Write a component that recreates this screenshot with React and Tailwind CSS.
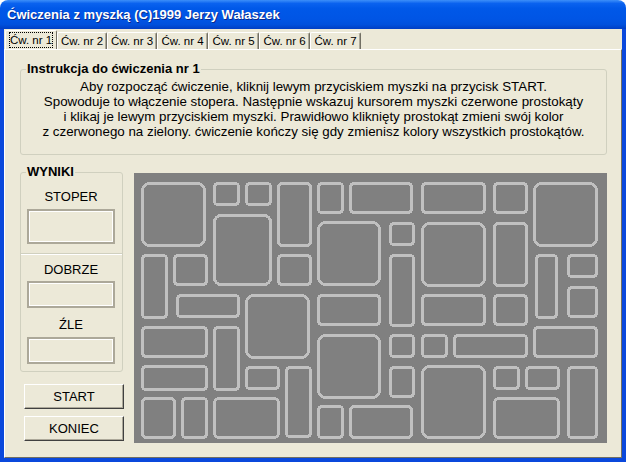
import React from "react";

// Outer bounds [x1, y1, x2, y2] of the rounded tiles on the game board, in window pixels.
const TILES = [
  [141, 182, 206, 247], [213, 182, 240, 206], [245, 182, 272, 206], [277, 182, 312, 247],
  [317, 182, 344, 214], [349, 182, 413, 214], [213, 214, 272, 286], [141, 254, 168, 319],
  [173, 254, 208, 286], [277, 254, 312, 286], [317, 221, 381, 286], [176, 294, 240, 318],
  [245, 294, 310, 359], [317, 294, 381, 326], [141, 326, 208, 358], [213, 326, 240, 391],
  [317, 334, 381, 399], [141, 365, 208, 391], [245, 366, 280, 390], [285, 366, 312, 438],
  [141, 397, 176, 439], [181, 397, 208, 439], [213, 397, 280, 439], [317, 405, 344, 439],
  [349, 405, 413, 439], [421, 182, 486, 214], [493, 182, 528, 214], [533, 182, 598, 247],
  [389, 222, 415, 246], [421, 222, 486, 287], [493, 222, 528, 287], [389, 254, 415, 327],
  [535, 254, 558, 319], [567, 254, 598, 278], [567, 286, 598, 318], [421, 294, 486, 326],
  [493, 294, 528, 326], [389, 334, 415, 358], [421, 334, 448, 358], [453, 334, 528, 358],
  [533, 326, 598, 358], [389, 366, 415, 398], [421, 365, 486, 439], [493, 366, 520, 390],
  [525, 366, 560, 390], [567, 366, 598, 439], [493, 397, 560, 439],
];

function Board() {
  return (
    <svg
      width="473"
      height="270"
      viewBox="134 173 473 270"
      className="block"
      shapeRendering="crispEdges"
    >
      <rect x="134" y="173" width="473" height="270" fill="#808080" />
      {TILES.map(([x1, y1, x2, y2], i) => {
        const w = x2 - x1;
        const h = y2 - y1;
        const r = Math.min(7.5, Math.max(3.5, Math.min(w, h) / 9));
        return (
          <rect
            key={i}
            x={x1 + 1.5}
            y={y1 + 1.5}
            width={w - 3}
            height={h - 3}
            rx={r}
            fill="none"
            stroke="#c0c0c0"
            strokeWidth="3"
          />
        );
      })}
    </svg>
  );
}

const TABS = [
  { label: "Ćw. nr 1", w: "w-[52px]" },
  { label: "Ćw. nr 2", w: "w-[50px]" },
  { label: "Ćw. nr 3", w: "w-[50px]" },
  { label: "Ćw. nr 4", w: "w-[51px]" },
  { label: "Ćw. nr 5", w: "w-[51px]" },
  { label: "Ćw. nr 6", w: "w-[51px]" },
  { label: "Ćw. nr 7", w: "w-[51px]" },
];

function Tabs() {
  return (
    <div className="h-[20px] flex items-end pl-[1px]">
      {TABS.map((t, i) =>
        i === 0 ? (
          <div
            key={t.label}
            className={`${t.w} h-[19px] flex items-center justify-center border-t border-l border-white border-r border-r-[#716f64] rounded-t-[2px] bg-[#ece9d8]`}
          >
            <span className="w-[44px] h-[16px] shrink-0 flex items-center justify-center whitespace-nowrap text-[11.5px] leading-[14px] border border-dotted border-black">
              {t.label}
            </span>
          </div>
        ) : (
          <div
            key={t.label}
            className={`${t.w} h-[17px] flex items-center justify-center border-t border-l border-white border-r border-r-[#716f64] rounded-t-[2px] shadow-[inset_-1px_0_0_#aca899]`}
          >
            <span className="whitespace-nowrap text-[11.5px] leading-[14px]">{t.label}</span>
          </div>
        )
      )}
    </div>
  );
}

function GroupCaption({ children }) {
  return (
    <span className="absolute left-[5px] -top-[8px] px-[1px] bg-[#ece9d8] text-[13px] leading-[14px] font-bold">
      {children}
    </span>
  );
}

function ReadoutBox({ h }) {
  return (
    <div
      className={`ml-[6px] w-[88px] ${h} border-2 border-[#aca899] shadow-[inset_0_0_0_1px_#ffffff]`}
    />
  );
}

function Label({ children }) {
  return (
    <div className="ml-[6px] w-[88px] text-center text-[13px] leading-[15px]">{children}</div>
  );
}

function Button({ children }) {
  return (
    <div className="ml-[4px] w-[100px] h-[25px] flex items-center justify-center text-[13px] border-t border-l border-white border-b border-r border-b-[#404040] border-r-[#404040] shadow-[inset_-1px_-1px_0_#aca899]">
      {children}
    </div>
  );
}

export default function App() {
  return (
    <div className="w-[626px] h-[462px] flex flex-col bg-white font-['Liberation_Sans',Arial,sans-serif] text-black">
      {/* caption bar */}
      <div className="h-[29px] shrink-0 rounded-t-[8px] flex items-center pl-[7px] bg-[linear-gradient(to_bottom,#3d8ff9_0%,#0a62ef_12%,#0058e8_30%,#0055e5_65%,#0050dc_85%,#003ec4_100%)]">
        <span className="text-white font-bold text-[13px] leading-[16px] [text-shadow:1px_1px_0_#0b2a8a]">
          Ćwiczenia z myszką (C)1999 Jerzy Wałaszek
        </span>
      </div>

      {/* client area inside the blue frame */}
      <div className="flex-1 flex flex-col bg-[#ece9d8] border-x-4 border-b-4 border-[#0a48dc]">
        <Tabs />

        <div className="flex-1 flex flex-col border-t border-l border-white border-r border-b border-r-[#716f64] border-b-[#716f64]">
          {/* instructions */}
          <div className="relative mt-[19px] ml-[15px] w-[587px] h-[86px] border border-[#d0d0bf] rounded-[3px] pt-[9px] text-[13.33px] leading-[15px] text-center">
            <GroupCaption>Instrukcja do ćwiczenia nr 1</GroupCaption>
            <div>Aby rozpocząć ćwiczenie, kliknij lewym przyciskiem myszki na przycisk START.</div>
            <div>Spowoduje to włączenie stopera. Następnie wskazuj kursorem myszki czerwone prostokąty</div>
            <div>i klikaj je lewym przyciskiem myszki. Prawidłowo kliknięty prostokąt zmieni swój kolor</div>
            <div>z czerwonego na zielony. ćwiczenie kończy się gdy zmienisz kolory wszystkich prostokątów.</div>
          </div>

          <div className="flex mt-[17px] ml-[15px]">
            {/* results column */}
            <div className="w-[104px] flex flex-col">
              <div className="relative w-[103px] h-[200px] border border-[#d0d0bf] rounded-[3px] flex flex-col">
                <GroupCaption>WYNIKI</GroupCaption>
                <div className="h-[81px] pt-[16px] border-b border-[#d0d0bf] shadow-[0_1px_0_#ffffff]">
                  <Label>STOPER</Label>
                  <div className="h-[5px]" />
                  <ReadoutBox h="h-[35px]" />
                </div>
                <div className="pt-[8px]">
                  <Label>DOBRZE</Label>
                  <div className="h-[4px]" />
                  <ReadoutBox h="h-[27px]" />
                  <div className="h-[9px]" />
                  <Label>ŹLE</Label>
                  <div className="h-[5px]" />
                  <ReadoutBox h="h-[27px]" />
                </div>
              </div>
              <div className="mt-[12px] flex flex-col gap-[7px]">
                <Button>START</Button>
                <Button>KONIEC</Button>
              </div>
            </div>

            {/* game board */}
            <div className="ml-[10px] mt-[1px]">
              <Board />
            </div>
          </div>
        </div>
      </div>
    </div>
  );
}
